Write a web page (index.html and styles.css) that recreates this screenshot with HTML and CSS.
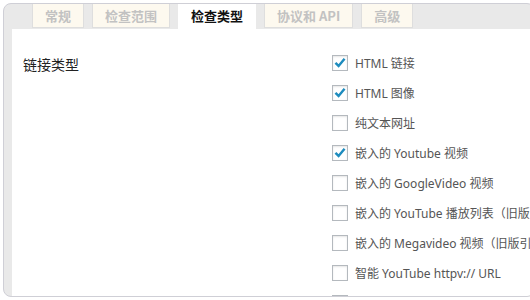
FILE: index.html
```html
<!DOCTYPE html>
<html lang="zh-CN">
<head>
<meta charset="utf-8">
<title>检查类型</title>
<link rel="stylesheet" href="styles.css">
</head>
<body>
<div class="wrap">
  <ul class="tabs">
    <li class="tab">常规</li>
    <li class="tab">检查范围</li>
    <li class="tab active">检查类型</li>
    <li class="tab">协议和 API</li>
    <li class="tab">高级</li>
  </ul>
  <div class="panel">
    <div class="row">
      <div class="label">链接类型</div>
      <ul class="options">
        <li class="opt"><span class="box checked"><svg viewBox="0 0 16 16"><path d="M2.8 7.8 L6.4 11.4 L13.2 3.2" /></svg></span><span class="txt">HTML 链接</span></li>
        <li class="opt"><span class="box checked"><svg viewBox="0 0 16 16"><path d="M2.8 7.8 L6.4 11.4 L13.2 3.2" /></svg></span><span class="txt">HTML 图像</span></li>
        <li class="opt"><span class="box"></span><span class="txt">纯文本网址</span></li>
        <li class="opt"><span class="box checked"><svg viewBox="0 0 16 16"><path d="M2.8 7.8 L6.4 11.4 L13.2 3.2" /></svg></span><span class="txt">嵌入的 Youtube 视频</span></li>
        <li class="opt"><span class="box"></span><span class="txt">嵌入的 GoogleVideo 视频</span></li>
        <li class="opt"><span class="box"></span><span class="txt">嵌入的 YouTube 播放列表（旧版嵌入代码）</span></li>
        <li class="opt"><span class="box"></span><span class="txt">嵌入的 Megavideo 视频（旧版引擎）</span></li>
        <li class="opt"><span class="box"></span><span class="txt">智能 YouTube httpv:// URL</span></li>
        <li class="opt"><span class="box"></span><span class="txt">智能 YouTube 播放列表</span></li>
      </ul>
    </div>
  </div>
</div>
</body>
</html>
```
FILE: styles.css
```css
html, body {
  margin: 0;
  padding: 0;
  background: #fff;
}
body {
  font-family: "Noto Sans", "Noto Sans CJK SC", sans-serif;
  font-size: 12px;
  color: #444;
}
.wrap {
  margin: 3px;
  width: 522px;
  height: 292px;
  border: 1px solid #cfcfd6;
  border-radius: 8px;
  background: #e9e9e9;
  padding-left: 8px;
  display: flex;
  flex-direction: column;
  overflow: hidden;
}
.tabs {
  list-style: none;
  margin: 0 0 0 20px;
  padding: 0;
  display: flex;
  gap: 8px;
  height: 25px;
  flex: none;
}
.tab {
  height: 23px;
  line-height: 23px;
  padding: 0 12px;
  background: #fdf9ef;
  border: 1px solid #dedede;
  border-top: none;
  font-family: "Noto Sans CJK SC", sans-serif;
  font-weight: bold;
  font-size: 13px;
  color: #c2c2c2;
  white-space: nowrap;
}
.tab.active {
  height: 25px;
  background: #fff;
  border: none;
  padding: 0 13px;
  color: #111;
}
.panel {
  flex: 1;
  background: #fff;
  border-radius: 0 0 7px 0;
  overflow: hidden;
}
.row {
  display: grid;
  grid-template-columns: 309px 1fr;
  padding: 19px 0 0 11px;
}
.label {
  font-family: "Noto Sans CJK SC", sans-serif;
  font-size: 14px;
  color: #222;
  line-height: 32px;
}
.options {
  list-style: none;
  margin: 0;
  padding: 0;
}
.opt {
  height: 30px;
  display: flex;
  align-items: center;
  white-space: nowrap;
}
.box {
  flex: none;
  width: 14px;
  height: 14px;
  border: 1px solid #b4b9be;
  background: #fff;
  box-shadow: inset 0 1px 2px rgba(0, 0, 0, 0.1);
  display: flex;
  align-items: center;
  justify-content: center;
}
.box svg {
  width: 16px;
  height: 16px;
  fill: none;
  stroke: #1e8cbe;
  stroke-width: 2.8;
}
.txt {
  margin-left: 7px;
  color: #555;
}
```
